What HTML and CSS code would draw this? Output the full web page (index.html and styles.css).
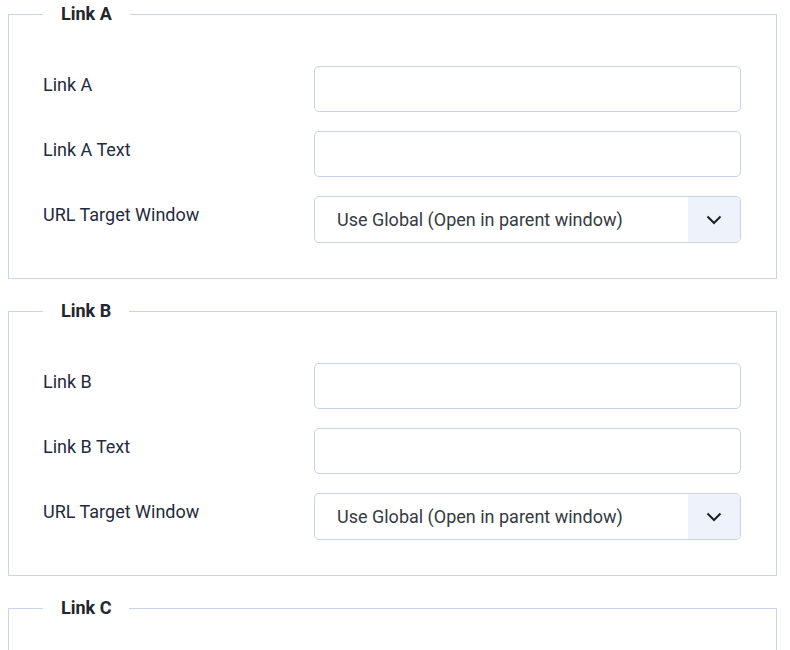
FILE: index.html
```html
<!DOCTYPE html>
<html lang="en">
<head>
<meta charset="utf-8">
<title>Links</title>
<link rel="stylesheet" href="styles.css">
</head>
<body>
<div class="page">
  <fieldset class="group">
    <legend class="group-title">Link A</legend>
    <div class="rows">
      <label class="row-label">Link A</label>
      <div class="control"><input class="text-input" type="text"></div>
      <label class="row-label">Link A Text</label>
      <div class="control"><input class="text-input" type="text"></div>
      <label class="row-label">URL Target Window</label>
      <div class="control">
        <div class="select">
          <span class="select-value">Use Global (Open in parent window)</span>
          <span class="select-btn"><svg width="16" height="10" viewBox="0 0 16 10"><path d="M1.5 1.5 L8 8 L14.5 1.5" fill="none" stroke="#1c1f26" stroke-width="2"/></svg></span>
        </div>
      </div>
    </div>
  </fieldset>

  <fieldset class="group">
    <legend class="group-title">Link B</legend>
    <div class="rows">
      <label class="row-label">Link B</label>
      <div class="control"><input class="text-input" type="text"></div>
      <label class="row-label">Link B Text</label>
      <div class="control"><input class="text-input" type="text"></div>
      <label class="row-label">URL Target Window</label>
      <div class="control">
        <div class="select">
          <span class="select-value">Use Global (Open in parent window)</span>
          <span class="select-btn"><svg width="16" height="10" viewBox="0 0 16 10"><path d="M1.5 1.5 L8 8 L14.5 1.5" fill="none" stroke="#1c1f26" stroke-width="2"/></svg></span>
        </div>
      </div>
    </div>
  </fieldset>

  <fieldset class="group">
    <legend class="group-title">Link C</legend>
    <div class="rows-empty"></div>
  </fieldset>
</div>
</body>
</html>
```

FILE: styles.css
```css
html, body {
  margin: 0;
  padding: 0;
  background: #ffffff;
  overflow: hidden;
  height: 650px;
}

body {
  font-family: Roboto, "Liberation Sans", Arial, sans-serif;
  font-size: 18px;
  color: #242f40;
}

.page {
  padding: 0 13px 0 8px;
}

.group {
  margin: 0 0 18px 0;
  padding: 38px 35px 35px 34px;
  border: 1px solid #cad4e3;
  min-width: 0;
}

.group-title {
  padding: 0 18px;
  font-weight: 700;
  font-size: 18px;
  line-height: 28px;
  color: #22262d;
}

.rows {
  display: grid;
  grid-template-columns: 271px 1fr;
  row-gap: 19px;
}

.rows-empty {
  height: 170px;
}

.row-label {
  padding-top: 5px;
  line-height: 27px;
  color: #1f2b3e;
}

.control {
  display: flex;
}

.text-input {
  box-sizing: border-box;
  width: 100%;
  height: 46px;
  margin: 0;
  border: 1px solid #c8d2e2;
  border-radius: 5px;
  background: #ffffff;
  font: inherit;
}

.select {
  box-sizing: border-box;
  width: 100%;
  height: 47px;
  display: flex;
  align-items: stretch;
  border: 1px solid #c8d2e2;
  border-radius: 5px;
  overflow: hidden;
}

.select-value {
  flex: 1;
  display: flex;
  align-items: center;
  padding-left: 22px;
  color: #353a42;
}

.select-btn {
  width: 52px;
  display: flex;
  align-items: center;
  justify-content: center;
  background: #eef2fa;
}
```
